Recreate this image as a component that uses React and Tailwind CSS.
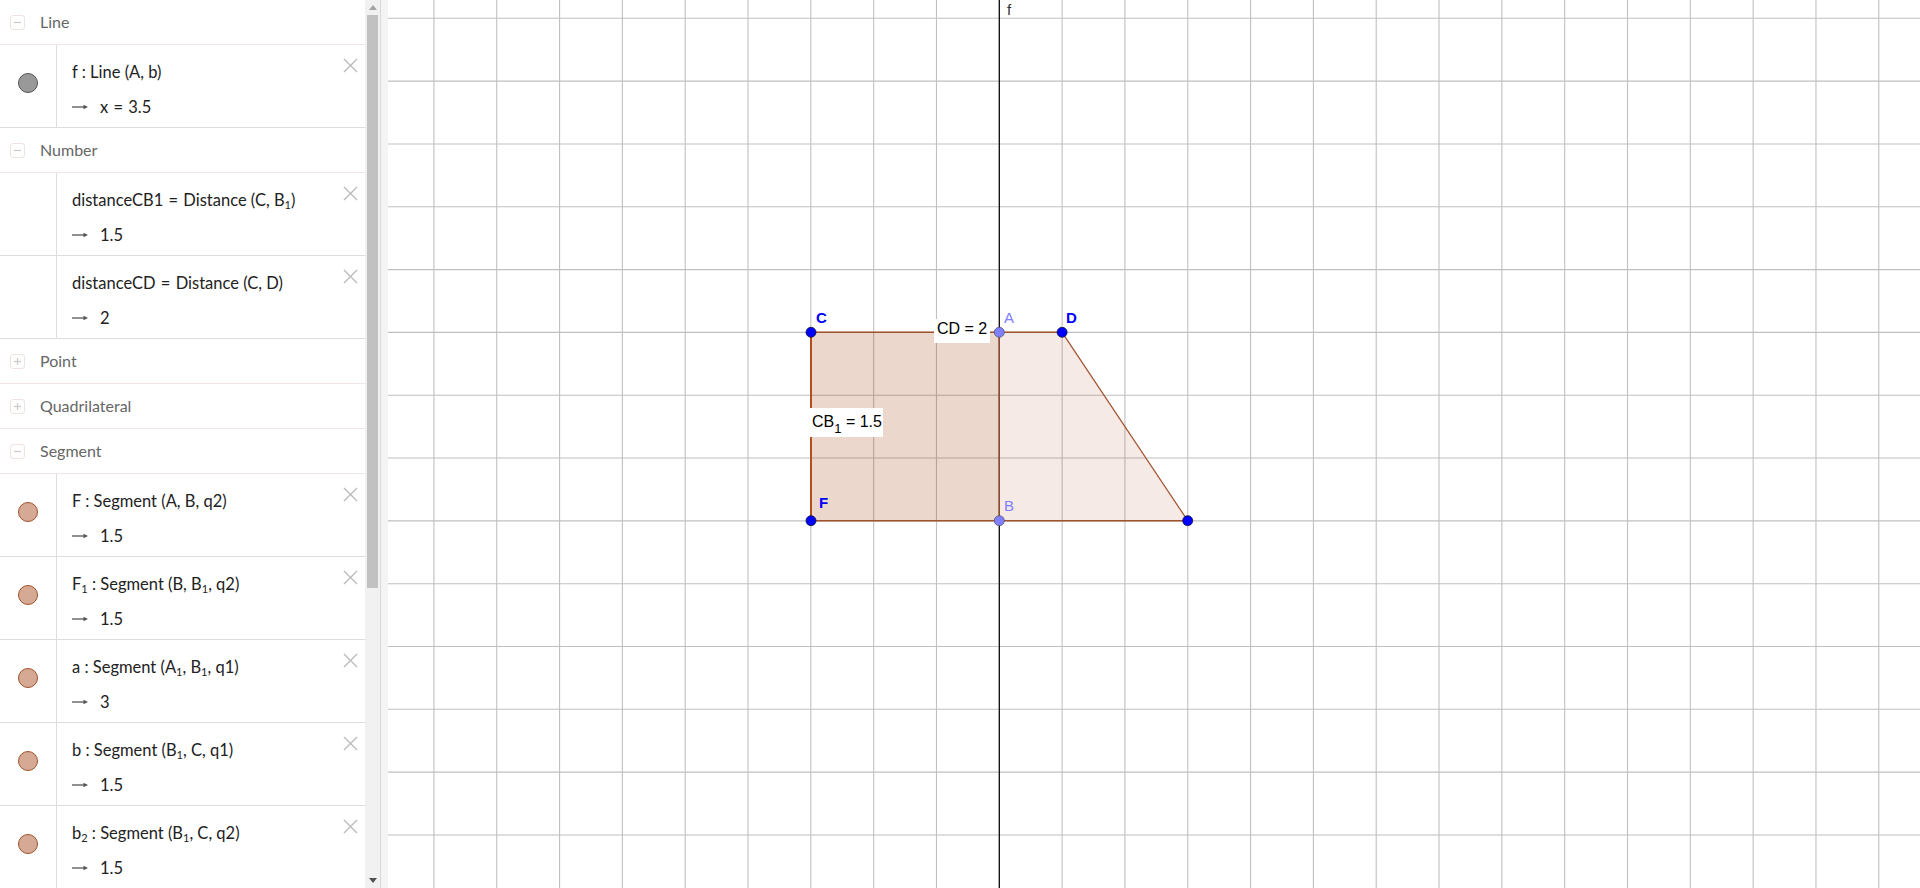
import React from "react";

const Sub = ({ children }) => (
  <sub className="text-[11px] leading-none align-baseline relative top-[3px]">{children}</sub>
);

const Eq = () => <span className="mx-[1px]">=</span>;

function Header({ label, open }) {
  return (
    <div className="flex h-[45px] shrink-0 items-center border-b border-[#f1e8e5]">
      <div className="ml-[10px] flex h-[15px] w-[15px] items-center justify-center rounded-[3px] border border-[#efe2df]">
        <svg width="9" height="9" viewBox="0 0 9 9">
          <line x1="1" y1="4.5" x2="8" y2="4.5" stroke="#c9c9c9" strokeWidth="1.2" />
          {!open && <line x1="4.5" y1="1" x2="4.5" y2="8" stroke="#c9c9c9" strokeWidth="1.2" />}
        </svg>
      </div>
      <span className="ml-[15px] text-[16px] text-[#666666]">{label}</span>
    </div>
  );
}

function Arrow() {
  return (
    <svg width="16" height="8" viewBox="0 0 16 8" className="shrink-0">
      <line x1="0" y1="4" x2="13" y2="4" stroke="#555" strokeWidth="1.3" />
      <polygon points="16,4 11.5,1.8 11.5,6.2" fill="#555" />
    </svg>
  );
}

function Item({ dot, def, value }) {
  return (
    <div className="flex h-[83px] shrink-0 border-b border-[#dddddd]">
      <div className="flex w-[57px] shrink-0 justify-center border-r border-[#dddddd] pt-[28px]">
        {dot === "gray" && (
          <div className="h-[20px] w-[20px] rounded-full border border-[#555555] bg-[#999999]" />
        )}
        {dot === "brown" && (
          <div className="h-[20px] w-[20px] rounded-full border border-[#a0522d] bg-[#d6a994]" />
        )}
      </div>
      <div className="flex flex-1">
        <div className="flex-1 pl-[15px] pt-[15px] text-[#222222]">
          <div className="h-[24px] text-[16.5px] leading-[24px] whitespace-nowrap">{def}</div>
          <div className="mt-[11px] flex h-[24px] items-center">
            <Arrow />
            <span className="ml-[12px] text-[16.5px] leading-[24px]">{value}</span>
          </div>
        </div>
        <div className="mr-[7px] mt-[13px] h-[15px] w-[15px]">
          <svg width="15" height="15" viewBox="0 0 15 15">
            <line x1="1" y1="1" x2="14" y2="14" stroke="#bdbdbd" strokeWidth="1.4" />
            <line x1="14" y1="1" x2="1" y2="14" stroke="#bdbdbd" strokeWidth="1.4" />
          </svg>
        </div>
      </div>
    </div>
  );
}

function Canvas() {
  const s = 62.82;
  const ax = 611.3;
  const y0 = 18.3;
  const vs = [];
  for (let k = -9; k <= 14; k++) vs.push(ax + k * s);
  const hs = [];
  for (let k = 0; k <= 13; k++) hs.push(y0 + k * s);
  const C = [423, 332.3];
  const A = [611.3, 332.3];
  const D = [674.1, 332.3];
  const F = [423, 520.7];
  const B = [611.3, 520.7];
  const E = [799.7, 520.7];
  const P = (p) => p.join(",");
  const edge = "#a0522d";
  return (
    <svg width="1532" height="888" viewBox="0 0 1532 888" className="block">
      {vs.map((x, i) => (
        <line key={"v" + i} x1={x} y1="0" x2={x} y2="888" stroke="#c0c0c0" strokeWidth="1.1" />
      ))}
      {hs.map((y, i) => (
        <line key={"h" + i} x1="0" y1={y} x2="1532" y2={y} stroke="#c0c0c0" strokeWidth="1.1" />
      ))}
      <polygon points={[C, D, E, F].map(P).join(" ")} fill="#993300" fillOpacity="0.1" />
      <polygon points={[C, A, B, F].map(P).join(" ")} fill="#993300" fillOpacity="0.1" />
      <line x1={ax} y1="0" x2={ax} y2="888" stroke="#000" strokeWidth="1.2" />
      <line x1={A[0]} y1={A[1]} x2={B[0]} y2={B[1]} stroke={edge} strokeWidth="1.2" />
      <line x1={C[0]} y1={C[1]} x2={D[0]} y2={D[1]} stroke={edge} strokeWidth="1.4" />
      <line x1={D[0]} y1={D[1]} x2={E[0]} y2={E[1]} stroke={edge} strokeWidth="1.2" />
      <line x1={F[0]} y1={F[1]} x2={E[0]} y2={E[1]} stroke={edge} strokeWidth="1.4" />
      <line x1={C[0]} y1={C[1]} x2={F[0]} y2={F[1]} stroke="#b4501e" strokeWidth="2" />
      <rect x="546" y="319" width="56" height="24" fill="#ffffff" />
      <text x="549" y="334" fontFamily="'Liberation Sans', Arial, sans-serif" fontSize="16" fill="#000">
        CD = 2
      </text>
      <rect x="420" y="408" width="75" height="29" fill="#ffffff" />
      <text x="424" y="427" fontFamily="'Liberation Sans', Arial, sans-serif" fontSize="16" fill="#000">
        CB
        <tspan dy="6" fontSize="13">1</tspan>
        <tspan dy="-6"> = 1.5</tspan>
      </text>
      {[C, D, F, E].map((p, i) => (
        <circle key={"p" + i} cx={p[0]} cy={p[1]} r="5" fill="#0000ff" stroke="#101040" strokeWidth="0.8" />
      ))}
      {[A, B].map((p, i) => (
        <circle key={"q" + i} cx={p[0]} cy={p[1]} r="5" fill="#8080ff" stroke="#505070" strokeWidth="0.8" />
      ))}
      <g fontFamily="'Liberation Sans', Arial, sans-serif" fontSize="15" fontWeight="bold">
        <text x="428" y="323" fill="#0000ff">C</text>
        <text x="616" y="323" fill="#8080ff" fontWeight="normal">A</text>
        <text x="678" y="323" fill="#0000ff">D</text>
        <text x="431" y="508" fill="#0000ff">F</text>
        <text x="616" y="511" fill="#8080ff" fontWeight="normal">B</text>
      </g>
      <text x="619" y="15" fontFamily="'Liberation Sans', Arial, sans-serif" fontSize="15" fill="#333">
        f
      </text>
    </svg>
  );
}

export default function App() {
  return (
    <div className="flex h-[888px] w-[1920px] overflow-hidden bg-white" style={{ fontFamily: "Lato, 'Noto Sans', sans-serif" }}>
      <div className="flex w-[380px] shrink-0">
        <div className="flex w-[365px] shrink-0 flex-col overflow-hidden">
          <Header label="Line" open />
          <Item dot="gray" def={<>f : Line (A, b)</>} value={<>x <Eq /> 3.5</>} />
          <Header label="Number" open />
          <Item def={<>distanceCB1 <Eq /> Distance (C, B<Sub>1</Sub>)</>} value="1.5" />
          <Item def={<>distanceCD <Eq /> Distance (C, D)</>} value="2" />
          <Header label="Point" />
          <Header label="Quadrilateral" />
          <Header label="Segment" open />
          <Item dot="brown" def={<>F : Segment (A, B, q2)</>} value="1.5" />
          <Item dot="brown" def={<>F<Sub>1</Sub> : Segment (B, B<Sub>1</Sub>, q2)</>} value="1.5" />
          <Item dot="brown" def={<>a : Segment (A<Sub>1</Sub>, B<Sub>1</Sub>, q1)</>} value="3" />
          <Item dot="brown" def={<>b : Segment (B<Sub>1</Sub>, C, q1)</>} value="1.5" />
          <Item dot="brown" def={<>b<Sub>2</Sub> : Segment (B<Sub>1</Sub>, C, q2)</>} value="1.5" />
        </div>
        <div className="flex w-[15px] shrink-0 flex-col bg-[#f1f1f1]">
          <div className="flex h-[15px] items-center justify-center">
            <svg width="8" height="5" viewBox="0 0 8 5">
              <polygon points="4,0 8,5 0,5" fill="#a3a3a3" />
            </svg>
          </div>
          <div className="mx-[2px] h-[573px] bg-[#c1c1c1]" />
          <div className="flex-1" />
          <div className="flex h-[15px] items-center justify-center">
            <svg width="8" height="5" viewBox="0 0 8 5">
              <polygon points="0,0 8,0 4,5" fill="#505050" />
            </svg>
          </div>
        </div>
      </div>
      <div className="w-[8px] shrink-0 border-l border-[#d9d9d9] bg-[#f4f4f4]" />
      <div className="flex-1">
        <Canvas />
      </div>
    </div>
  );
}
